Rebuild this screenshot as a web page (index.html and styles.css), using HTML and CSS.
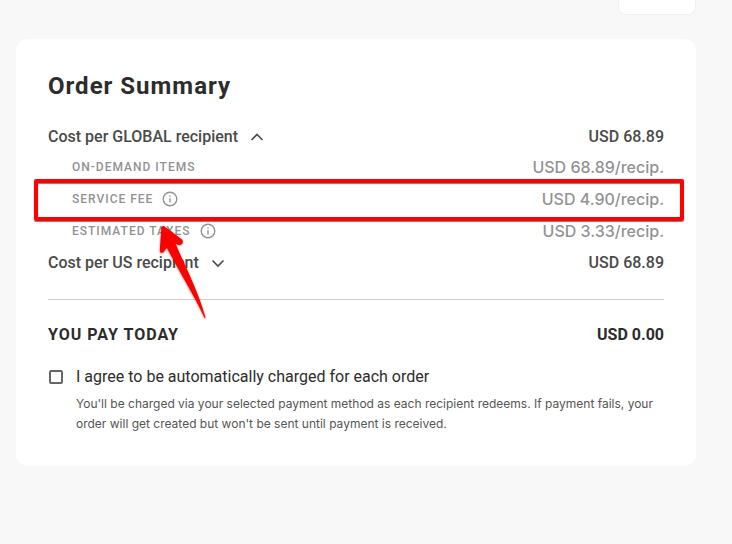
FILE: index.html
```html
<!DOCTYPE html>
<html lang="en">
<head>
    <meta charset="UTF-8">
    <meta name="viewport" content="width=device-width, initial-scale=1.0">
    <title>Order Summary</title>
    <link rel="stylesheet" href="styles.css">
</head>
<body>
    <main class="page">
        <div class="previous-card"></div>

        <section class="summary-card">
            <h1 class="title">Order Summary</h1>

            <div class="row">
                <button type="button" class="toggle" aria-expanded="true">
                    Cost per GLOBAL recipient
                    <svg class="chevron" viewBox="0 0 14 14" aria-hidden="true">
                        <path d="M1.5 10 L7 4.5 L12.5 10" />
                    </svg>
                </button>
                <span class="amount">USD 68.89</span>
            </div>

            <div class="details">
                <div class="detail-row">
                    <span class="detail-label">On-demand items</span>
                    <span class="detail-amount">USD 68.89/recip.</span>
                </div>
                <div class="detail-row highlighted">
                    <span class="detail-label">Service fee</span>
                    <button type="button" class="info" aria-label="About the service fee">
                        <svg viewBox="0 0 16 16" aria-hidden="true">
                            <circle cx="8" cy="8" r="6.8" />
                            <path d="M8 7.2 V11.4 M8 4.4 V5.8" />
                        </svg>
                    </button>
                    <span class="detail-amount">USD 4.90/recip.</span>
                    <svg class="arrow" viewBox="0 0 54 100" aria-hidden="true">
                        <path d="M6 4.5 C7 3.5 8.5 4 10 5.5 L25.5 17 C28.5 19.5 26 24 22 22.8 L19.5 21.6 C28 42 42 68 49.5 95.5 L48.8 96.5 C38 73 23 49 10.8 25.8 L8 29.5 C6 32 3.5 30.5 3.8 28 L5.3 6 Z" />
                    </svg>
                </div>
                <div class="detail-row">
                    <span class="detail-label">Estimated taxes</span>
                    <button type="button" class="info" aria-label="About estimated taxes">
                        <svg viewBox="0 0 16 16" aria-hidden="true">
                            <circle cx="8" cy="8" r="6.8" />
                            <path d="M8 7.2 V11.4 M8 4.4 V5.8" />
                        </svg>
                    </button>
                    <span class="detail-amount">USD 3.33/recip.</span>
                </div>
            </div>

            <div class="row">
                <button type="button" class="toggle" aria-expanded="false">
                    Cost per US recipient
                    <svg class="chevron" viewBox="0 0 14 14" aria-hidden="true">
                        <path d="M1.5 4.5 L7 10 L12.5 4.5" />
                    </svg>
                </button>
                <span class="amount">USD 68.89</span>
            </div>

            <hr class="divider">

            <div class="total">
                <span class="total-label">You pay today</span>
                <span>USD 0.00</span>
            </div>

            <div class="agreement">
                <input type="checkbox" id="agree" class="checkbox" aria-describedby="agree-note">
                <label for="agree">I agree to be automatically charged for each order</label>
            </div>
            <p class="note" id="agree-note">You'll be charged via your selected payment method as each recipient redeems. If payment fails, your order will get created but won't be sent until payment is received.</p>
        </section>
    </main>
</body>
</html>
```
FILE: styles.css
```css
* {
    margin: 0;
    padding: 0;
    box-sizing: border-box;
}

body {
    background: #f8f8f8;
    color: #2c2c2c;
    font-family: Roboto, "Liberation Sans", sans-serif;
    font-size: 16px;
    line-height: 24px;
}

button {
    background: none;
    border: none;
    color: inherit;
    font: inherit;
    letter-spacing: inherit;
    cursor: pointer;
}

.page {
    padding: 0 36px 32px 16px;
}

/* Bottom edge of the card above */
.previous-card {
    width: 78px;
    height: 15px;
    margin: 0 0 24px auto;
    background: #fff;
    border: 1px solid #f0f0f0;
    border-top: none;
    border-radius: 0 0 8px 8px;
}

.summary-card {
    background: #fff;
    border-radius: 12px;
    padding: 32px;
}

.title {
    font-size: 24px;
    line-height: 30px;
    font-weight: 700;
    letter-spacing: 1px;
    margin-bottom: 22px;
}

.row {
    display: flex;
    justify-content: space-between;
    align-items: center;
    height: 28px;
    color: #4a4a4a;
    font-weight: 500;
}

.toggle {
    display: flex;
    align-items: center;
    gap: 12px;
}

.chevron {
    width: 14px;
    height: 14px;
    fill: none;
    stroke: #4a4a4a;
    stroke-width: 1.6;
}

/* Cost breakdown */
.details {
    padding-left: 24px;
    margin-bottom: 2px;
}

.detail-row {
    position: relative;
    display: flex;
    align-items: center;
    height: 32px;
    color: #929292;
    font-weight: 500;
}

.detail-label {
    font-size: 12px;
    letter-spacing: 1px;
    text-transform: uppercase;
}

.detail-amount {
    margin-left: auto;
    font-family: Inter, Roboto, sans-serif;
}

.info {
    display: flex;
    margin-left: 9px;
}

.info svg {
    width: 16px;
    height: 16px;
    fill: none;
    stroke: #929292;
    stroke-width: 1.4;
}

.highlighted {
    z-index: 1;
}

.highlighted::after {
    content: "";
    position: absolute;
    inset: -3px -20px -6px -38px;
    border: 4px solid #f00;
    border-radius: 2px;
    box-shadow: 0 1px 1px #777, inset 0 1px 1px #777;
    pointer-events: none;
}

.arrow {
    position: absolute;
    top: 40px;
    left: 84px;
    width: 54px;
    height: 100px;
    fill: #f00;
    filter: drop-shadow(0 1px 1px rgba(0, 0, 0, 0.4));
    pointer-events: none;
}

.highlighted::after,
.highlighted .arrow {
    margin-top: -1px;
}

.divider {
    border: none;
    border-top: 1px solid #cfcfcf;
    margin: 22px 0 23px;
}

.total {
    display: flex;
    justify-content: space-between;
    font-weight: 700;
    margin-bottom: 18px;
}

.total-label {
    letter-spacing: 1px;
    text-transform: uppercase;
}

.agreement {
    display: flex;
    align-items: center;
    gap: 13px;
}

.checkbox {
    appearance: none;
    width: 14px;
    height: 14px;
    border: 2px solid #666;
    border-radius: 2px;
    margin-left: 1px;
}

.checkbox:checked {
    background: #2c2c2c;
}

.note {
    margin: 5px 0 0 28px;
    color: #555;
    font-family: Inter, Roboto, sans-serif;
    font-size: 12px;
    line-height: 20px;
}
```
